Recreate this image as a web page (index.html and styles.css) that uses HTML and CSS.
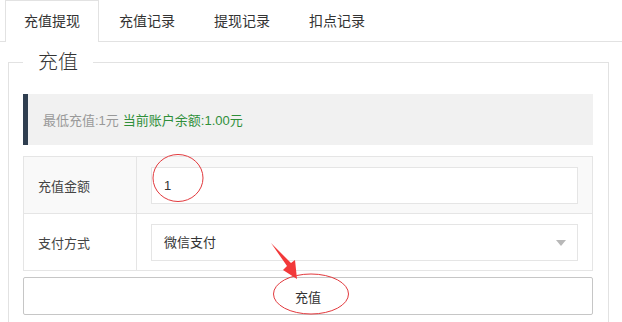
FILE: index.html
```html
<!DOCTYPE html>
<html lang="zh-CN">
<head>
  <meta charset="UTF-8">
  <meta name="viewport" content="width=device-width, height=device-height">
  <link rel="stylesheet" href="styles.css">
</head>
<body>
  <div class="page">
    <ul class="tabs">
      <li class="tab active">充值提现</li>
      <li class="tab">充值记录</li>
      <li class="tab">提现记录</li>
      <li class="tab">扣点记录</li>
    </ul>

    <fieldset class="panel">
      <legend>充值</legend>

      <div class="notice">
        <span class="muted">最低充值:1元</span>
        <span class="balance">当前账户余额:1.00元</span>
      </div>

      <table class="form-table">
        <tr class="odd">
          <td class="label">充值金额</td>
          <td><div class="field">1</div></td>
        </tr>
        <tr>
          <td class="label">支付方式</td>
          <td><div class="field select">微信支付<span class="caret"></span></div></td>
        </tr>
      </table>

      <button class="submit">充值</button>
    </fieldset>

    <!-- red markup drawn over the screenshot -->
    <svg class="marks" width="622" height="322" viewBox="0 0 622 322">
      <ellipse cx="178" cy="178" rx="25" ry="23.5" fill="none" stroke="#e2393d" stroke-width="1"/>
      <ellipse cx="311" cy="294" rx="37.5" ry="20" fill="none" stroke="#e2393d" stroke-width="1"/>
      <polygon points="271,243 291,263 295,260 297,279 283,270 287,266" fill="#f2393a"/>
    </svg>
  </div>
</body>
</html>
```

FILE: styles.css
```css
body {
  margin: 0;
  background: #fff;
  font-family: "Liberation Sans", "Noto Sans CJK SC", sans-serif;
  color: #333;
}

.page {
  position: relative;
  width: 622px;
  height: 322px;
  overflow: hidden;
}

.tabs {
  display: flex;
  margin: 0;
  padding: 0 0 0 5px;
  list-style: none;
  border-bottom: 1px solid #e2e2e2;
  height: 41px;
}

.tab {
  padding: 0 18px;
  border: 1px solid transparent;
  border-bottom: none;
  line-height: 40px;
  font-size: 14px;
  color: #333;
  margin-right: 1px;
}

.tab.active {
  border-color: #e2e2e2;
  background: #fff;
  height: 41px;
  margin-bottom: -1px;
}

.panel {
  margin: 8px 13px 0 8px;
  padding: 0 15px 20px 14px;
  border: 1px solid #e2e2e2;
  min-width: 0;
}

.panel legend {
  padding: 0 15px;
  margin-left: 0;
  font-size: 20px;
  font-weight: 300;
  line-height: 24px;
  color: #333;
}

.notice {
  margin-top: 20px;
  height: 51px;
  padding: 0 15px;
  background: #f1f1f1;
  border-left: 5px solid #2f3e50;
  display: flex;
  align-items: center;
  font-size: 13px;
}

.muted {
  color: #999;
  margin-right: 4px;
}

.balance {
  color: #2f8f3a;
}

.form-table {
  width: 100%;
  margin-top: 11px;
  border-collapse: collapse;
  font-size: 13px;
}

.form-table td {
  border: 1px solid #e5e5e5;
  padding: 9px 14px;
  height: 38px;
}

.form-table tr.odd {
  background: #f9f9f9;
}

.form-table td.label {
  width: 84px;
  padding-left: 14px;
  color: #444;
}

.field {
  position: relative;
  height: 35px;
  line-height: 35px;
  padding: 0 12px;
  border: 1px solid #e5e5e5;
  background: #fff;
  color: #333;
}

.caret {
  position: absolute;
  right: 11px;
  top: 15px;
  width: 0;
  height: 0;
  border-left: 5px solid transparent;
  border-right: 5px solid transparent;
  border-top: 6px solid #b8b8b8;
}

.submit {
  display: block;
  width: 100%;
  height: 38px;
  margin-top: 6px;
  background: #fff;
  border: 1px solid #c6c6c6;
  border-radius: 2px;
  font-family: inherit;
  font-size: 13px;
  color: #333;
}

.marks {
  position: absolute;
  left: 0;
  top: 0;
  pointer-events: none;
}
```
